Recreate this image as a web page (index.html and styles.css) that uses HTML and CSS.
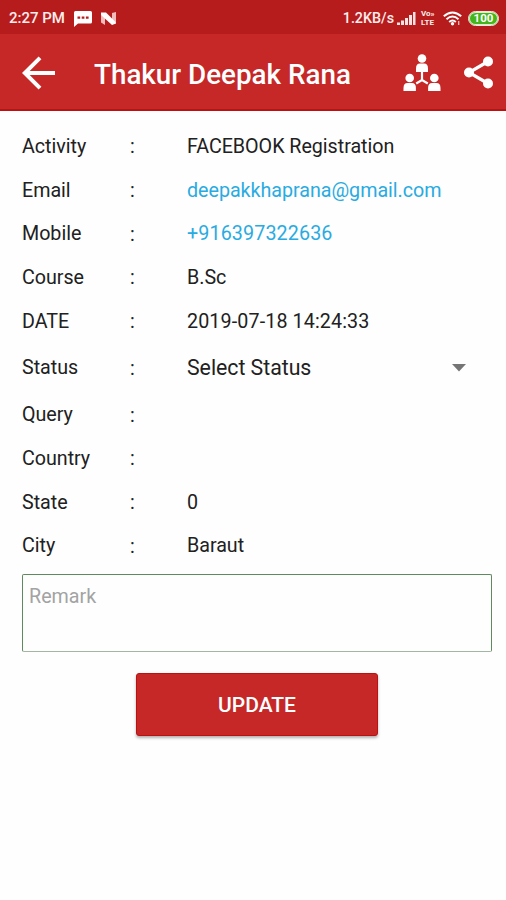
FILE: index.html
```html
<!DOCTYPE html>
<html lang="en">
<head>
<meta charset="utf-8">
<title>Thakur Deepak Rana</title>
<link rel="stylesheet" href="styles.css">
</head>
<body>
<div class="statusbar">
  <span class="clock">2:27 PM</span>
  <svg class="msg" width="18" height="16" viewBox="0 0 18 16"><path fill="#fff" d="M1.500 0h15a1.500 1.500 0 0 1 1.500 1.500v9.500a1.500 1.500 0 0 1-1.500 1.500H4L0 16V1.500A1.500 1.500 0 0 1 1.500 0z"/><path fill="#b71c1c" d="M3.500 5.500h2.700v2.200H3.500zM7.700 5.500h2.700v2.200H7.700zM11.900 5.500h2.700v2.200h-2.700z"/></svg>
  <svg class="nougat" width="17" height="13" viewBox="0 0 17 13"><path fill="#f3bcbc" d="M1 2.500l4 2V13L1 10.500zM12 1l4-1v10.500l-4 2z"/><path fill="#fff" d="M1 .5h5L16 10.500v1l-4 1.500L1 3z"/></svg>
  <span class="speed">1.2KB/s</span>
  <svg class="signal" width="19" height="13" viewBox="0 0 19 13"><path fill="#fbe3e3" d="M0 10.500h3V13H0zM4 8.500h3V13H4zM8 6h3v7H8zM12 3h3v10h-3zM16 0h2.500v13H16z"/></svg>
  <span class="volte"><span>Vo»</span><span>LTE</span></span>
  <svg class="wifi" width="19" height="15" viewBox="0 0 19 15"><g fill="none" stroke="#fff" stroke-width="1.900"><path d="M.8 5.300q8.700-7.800 17.400 0"/><path d="M3.500 8.200q6-5.400 12 0"/><path d="M6.200 11q3.300-3 6.600 0"/></g><circle cx="9.500" cy="12.800" r="1.700" fill="#fff"/><path d="M15.700 10v4" stroke="#f3bcbc" stroke-width="1.300"/></svg>
  <span class="battery">100</span>
</div>
<header class="appbar">
  <svg class="back" width="34" height="34" viewBox="0 0 34 34"><path fill="none" stroke="#fff" stroke-width="4" d="M33 17H3.500M18 1.800L2.800 17 18 32.200"/></svg>
  <h1 class="title">Thakur Deepak Rana</h1>
  <svg class="team" width="38" height="38" viewBox="0 0 38 38"><g fill="#fff"><circle cx="19" cy="4.500" r="4.300"/><path d="M13 18v-3.500q0-5 4-5h4q4 0 4 5V18z"/><circle cx="6.700" cy="24" r="4.300"/><path d="M.5 37v-3q0-5 4-5h4.400q4 0 4 5v3z"/><circle cx="31.300" cy="24" r="4.300"/><path d="M25.100 37v-3q0-5 4-5h4.400q4 0 4 5v3z"/></g><path fill="none" stroke="#fff" stroke-width="2.200" d="M19 18v8.500M13.200 29.500L19 26l5.800 3.500"/></svg>
  <svg class="share" width="30" height="33" viewBox="0 0 30 33"><path fill="none" stroke="#fff" stroke-width="3.200" d="M24 5.500L5 16.500l19 11"/><g fill="#fff"><circle cx="24" cy="5.500" r="5"/><circle cx="5" cy="16.500" r="5"/><circle cx="24" cy="27.500" r="5"/></g></svg>
</header>
<main class="details">
  <div class="row"><span>Activity</span><span class="colon">:</span><span>FACEBOOK Registration</span></div>
  <div class="row"><span>Email</span><span class="colon">:</span><span class="link">deepakkhaprana@gmail.com</span></div>
  <div class="row"><span>Mobile</span><span class="colon">:</span><span class="link phone">+916397322636</span></div>
  <div class="row"><span>Course</span><span class="colon">:</span><span>B.Sc</span></div>
  <div class="row"><span>DATE</span><span class="colon">:</span><span class="phone">2019-07-18 14:24:33</span></div>
  <div class="row status"><span>Status</span><span class="colon">:</span><span class="select">Select Status<svg width="14" height="8" viewBox="0 0 14 8"><path fill="#757575" d="M0 0h14L7 7.500z"/></svg></span></div>
  <div class="row"><span>Query</span><span class="colon">:</span><span></span></div>
  <div class="row"><span>Country</span><span class="colon">:</span><span></span></div>
  <div class="row"><span>State</span><span class="colon">:</span><span>0</span></div>
  <div class="row"><span>City</span><span class="colon">:</span><span>Baraut</span></div>
  <div class="remark">Remark</div>
  <button class="update">UPDATE</button>
</main>
</body>
</html>
```

FILE: styles.css
```css
* { box-sizing: border-box; }
body {
  margin: 0;
  height: 900px;
  overflow: hidden;
  background: #fefefe;
  color: #212121;
  font-family: Roboto, "Liberation Sans", sans-serif;
}
svg { flex: none; display: block; }
.statusbar {
  height: 34px;
  display: flex;
  align-items: center;
  padding: 2px 7px 0 9px;
  background: #b71c1c;
  color: #fdeeee;
  font-weight: 500;
  font-size: 15px;
  white-space: nowrap;
}
.clock { width: 65px; }
.msg { margin-top: 2px; }
.nougat { margin-left: 8px; }
.speed { margin-left: auto; font-size: 14.3px; }
.signal { margin-left: 3px; }
.volte {
  display: flex;
  flex-direction: column;
  width: 16px;
  margin-left: 5px;
  font-size: 8px;
  line-height: 9px;
  font-weight: 700;
}
.wifi { margin-left: 6px; }
.battery {
  width: 31px;
  height: 15px;
  margin-left: 6px;
  border: 1.5px solid #fbe3e3;
  border-radius: 8px;
  background: #45b51c;
  box-shadow: inset 0 0 0 1px #d9f0cf;
  color: #fff;
  font-size: 11.5px;
  font-weight: 700;
  line-height: 13px;
  text-align: center;
}
.appbar {
  height: 77px;
  display: flex;
  align-items: center;
  padding: 2px 12px 0 22px;
  background: #c62828;
  border-bottom: 2px solid #b71313;
}
.back { margin-top: 1px; }
.title {
  flex: 1;
  margin: 4px 0 0 38px;
  color: #fff;
  font-size: 27.8px;
  font-weight: 500;
  line-height: 34px;
  white-space: nowrap;
}
.team { margin-top: 1px; }
.share { margin-left: 23px; }
.details {
  padding: 13.5px 14px 0 22px;
  font-size: 19.7px;
  display: flex;
  flex-direction: column;
}
.row {
  display: grid;
  grid-template-columns: 108px 57px 1fr;
  align-items: center;
  height: 43.7px;
  letter-spacing: -0.03px;
  white-space: nowrap;
}
.status { height: 50px; }
.colon { padding-top: 1px; }
.link { color: #29abe2; }
.phone { letter-spacing: 0.12px; }
.select {
  display: flex;
  align-items: center;
  justify-content: space-between;
  padding-right: 26px;
  font-size: 21.3px;
}
.remark {
  height: 78px;
  margin-top: 6px;
  padding: 10px 6px;
  border: 1.5px solid #5f8a5f;
  border-bottom-color: #a3b5a3;
  border-radius: 2px;
  color: #a3a3a3;
  line-height: 24px;
}
.update {
  align-self: center;
  width: 242px;
  height: 63px;
  margin-top: 21px;
  padding: 2px 0 0;
  border: 1.5px solid #bd1111;
  border-radius: 3px;
  background: #c62828;
  box-shadow: 0 2px 3px rgba(0, 0, 0, 0.3);
  color: #fff;
  font: 500 21px Roboto, "Liberation Sans", sans-serif;
}
```
